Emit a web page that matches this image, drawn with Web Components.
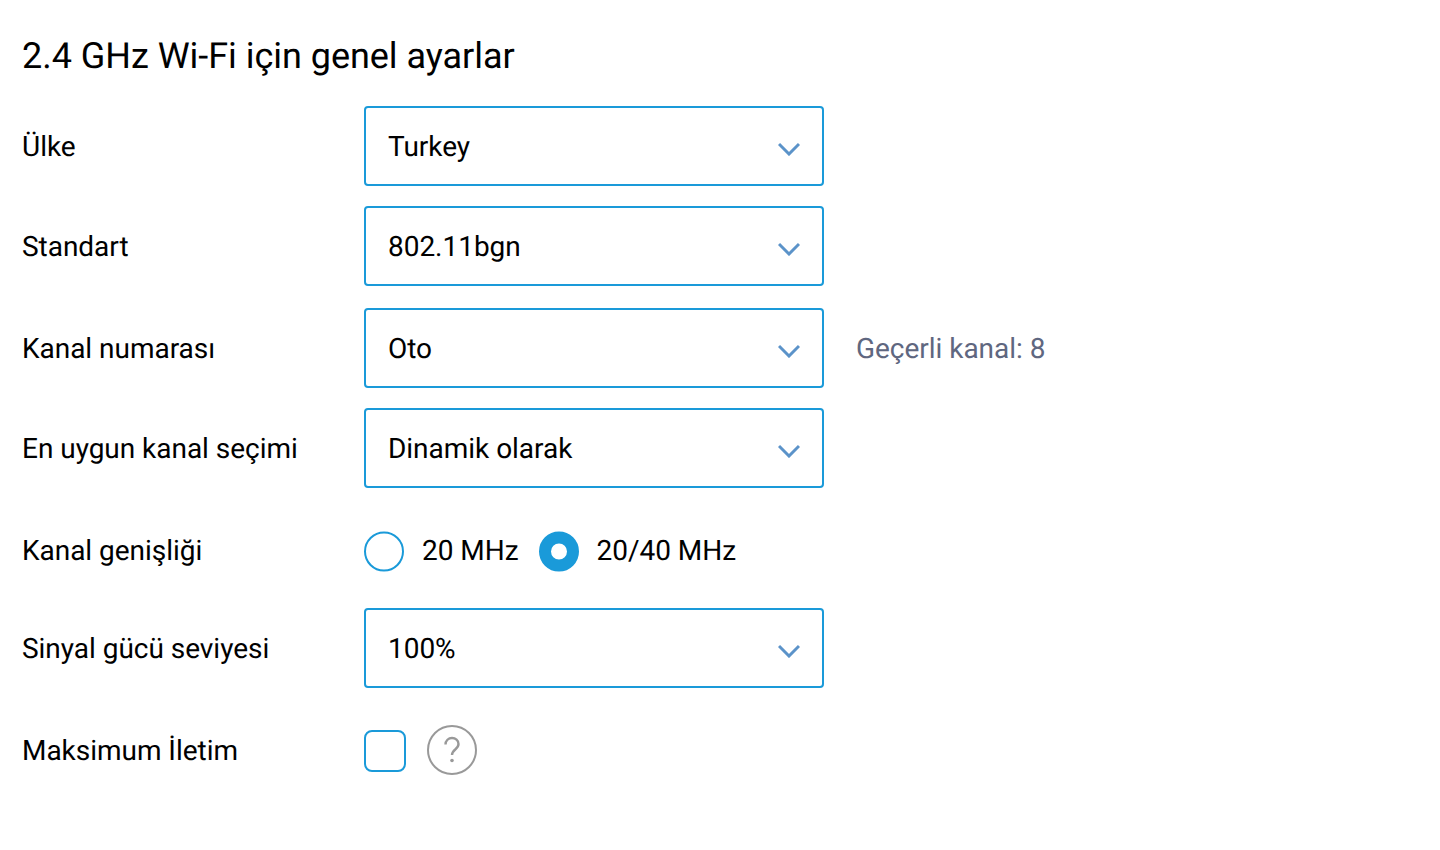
<!DOCTYPE html>
<html lang="tr">
<head>
<meta charset="utf-8">
<title>Wi-Fi</title>
<style>
  html, body { margin: 0; background: #fff; }
  body { font-family: Roboto, "Liberation Sans", sans-serif; color: #000; text-rendering: geometricPrecision; letter-spacing: -0.03px; }
</style>
</head>
<body>
<wifi-panel heading="2.4 GHz Wi-Fi için genel ayarlar">
  <form-row label="Ülke" style="--row:100px"><select-box value="Turkey"></select-box></form-row>
  <form-row label="Standart" style="--row:102px"><select-box value="802.11bgn"></select-box></form-row>
  <form-row label="Kanal numarası" style="--row:100px">
    <select-box value="Oto"></select-box>
    <span slot="note">Geçerli kanal: 8</span>
  </form-row>
  <form-row label="En uygun kanal seçimi" style="--row:102px"><select-box value="Dinamik olarak"></select-box></form-row>
  <form-row label="Kanal genişliği" style="--row:98px">
    <radio-option label="20 MHz"></radio-option>
    <radio-option label="20/40 MHz" checked></radio-option>
  </form-row>
  <form-row label="Sinyal gücü seviyesi" style="--row:102px"><select-box value="100%"></select-box></form-row>
  <form-row label="Maksimum İletim" style="--row:100px">
    <check-box></check-box>
    <help-icon></help-icon>
  </form-row>
</wifi-panel>

<script>
class WifiPanel extends HTMLElement {
  constructor() {
    super();
    this.attachShadow({ mode: "open" });
    this.shadowRoot.innerHTML = `
      <style>
        :host { display: block; padding: 36px 22px 0; }
        h1 { margin: 0 0 30px; font: 400 36px/40px Roboto, "Liberation Sans", sans-serif; color: #000; }
        .rows { display: flex; flex-direction: column; }
      </style>
      <h1>${this.getAttribute("heading")}</h1>
      <div class="rows"><slot></slot></div>
    `;
  }
}

class FormRow extends HTMLElement {
  constructor() {
    super();
    this.attachShadow({ mode: "open" });
    this.shadowRoot.innerHTML = `
      <style>
        :host { display: flex; align-items: flex-start; height: var(--row, 100px); }
        .label { width: 342px; flex: none; height: 80px; line-height: 82px; font-size: 28px; color: #000; }
        .control { display: flex; align-items: center; height: 80px; }
        .note { margin-left: 32px; font-size: 28px; color: #5f6780; }
      </style>
      <div class="label">${this.getAttribute("label")}</div>
      <div class="control"><slot></slot></div>
      <div class="control note"><slot name="note"></slot></div>
    `;
  }
}

class SelectBox extends HTMLElement {
  constructor() {
    super();
    this.attachShadow({ mode: "open" });
    this.shadowRoot.innerHTML = `
      <style>
        :host { display: flex; align-items: center; box-sizing: border-box; width: 460px; height: 80px; padding: 0 22.5px 0 22px; border: 2px solid #1a9ad9; border-radius: 4px; background: #fff; font-size: 28px; color: #000; }
        span { flex: 1; }
        svg { display: block; margin-top: 6px; }
      </style>
      <span>${this.getAttribute("value")}</span>
      <svg width="22" height="14" viewBox="0 0 22 14" fill="none" stroke="#5b93c9" stroke-width="3"><path d="M1 2l10 10L21 2"/></svg>
    `;
  }
}

class RadioOption extends HTMLElement {
  constructor() {
    super();
    this.attachShadow({ mode: "open" });
    this.shadowRoot.innerHTML = `
      <style>
        :host { display: inline-flex; align-items: center; margin-right: 20px; font-size: 28px; color: #000; }
        i { box-sizing: border-box; width: 40px; height: 40px; margin-right: 18px; border-radius: 50%; border: 2px solid #1a9ad9; background: #fff; transform: translateY(1.5px); }
        :host([checked]) i { border: 12px solid #1a9ad9; }
      </style>
      <i></i><span>${this.getAttribute("label")}</span>
    `;
  }
}

class CheckBox extends HTMLElement {
  constructor() {
    super();
    this.attachShadow({ mode: "open" });
    this.shadowRoot.innerHTML = `
      <style>
        :host { display: block; box-sizing: border-box; width: 42px; height: 42px; margin-top: 2px; border: 2px solid #1a9ad9; border-radius: 8px; background: #fff; }
      </style>
    `;
  }
}

class HelpIcon extends HTMLElement {
  constructor() {
    super();
    this.attachShadow({ mode: "open" });
    this.shadowRoot.innerHTML = `
      <style>
        :host { display: block; margin-left: 21px; width: 50px; height: 50px; }
        svg { display: block; }
      </style>
      <svg width="50" height="50" viewBox="0 0 50 50" fill="none" stroke="#999" stroke-width="2">
        <circle cx="25" cy="25" r="24"/>
        <path stroke-width="2.4" d="M18.5 19.5c0-4 3-6.500 6.500-6.500s6.500 2.500 6.500 6c0 5.500-6.500 5.500-6.500 11"/>
        <circle cx="25" cy="35.500" r="1.800" fill="#999" stroke="none"/>
      </svg>
    `;
  }
}

customElements.define("wifi-panel", WifiPanel);
customElements.define("form-row", FormRow);
customElements.define("select-box", SelectBox);
customElements.define("radio-option", RadioOption);
customElements.define("check-box", CheckBox);
customElements.define("help-icon", HelpIcon);
</script>
</body>
</html>
